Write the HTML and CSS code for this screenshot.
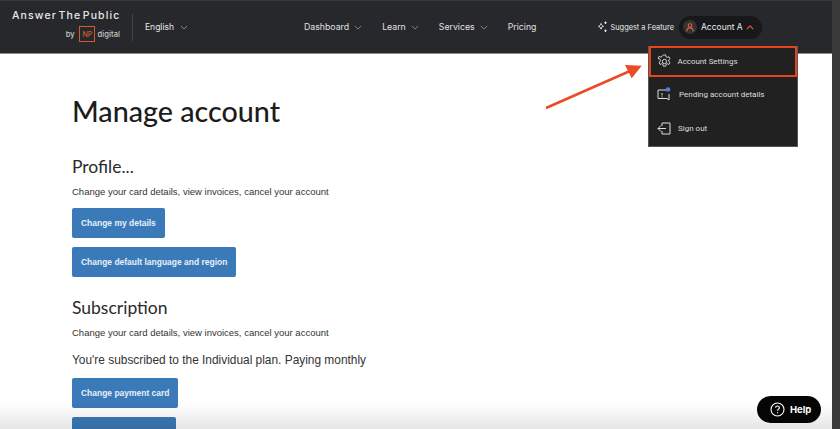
FILE: index.html
```html
<!DOCTYPE html>
<html lang="en">
<head>
    <meta charset="UTF-8">
    <meta name="viewport" content="width=device-width, initial-scale=1.0">
    <title>Manage account</title>
    <link rel="stylesheet" href="styles.css">
</head>
<body>
    <div class="page">
        <header class="topbar">
            <div class="brand">
                <div class="brand-name">Answer The Public</div>
                <div class="brand-by">
                    <span>by</span>
                    <span class="np-box">NP</span>
                    <span class="np-digital">digital</span>
                </div>
            </div>
            <div class="lang">
                <span>English</span>
                <svg class="chev" width="8" height="5" viewBox="0 0 10 6"><path d="M1 1l4 4 4-4"/></svg>
            </div>
            <nav class="nav">
                <a>Dashboard <svg class="chev" width="8" height="5" viewBox="0 0 10 6"><path d="M1 1l4 4 4-4"/></svg></a>
                <a>Learn <svg class="chev" width="8" height="5" viewBox="0 0 10 6"><path d="M1 1l4 4 4-4"/></svg></a>
                <a>Services <svg class="chev" width="8" height="5" viewBox="0 0 10 6"><path d="M1 1l4 4 4-4"/></svg></a>
                <a>Pricing</a>
            </nav>
            <div class="suggest">
                <svg width="12" height="12" viewBox="0 0 12 12" fill="none" stroke="#eee" stroke-width="1"><path d="M5 2.500c.4 1.600 1 2.300 2.500 2.800-1.500.5-2.100 1.200-2.500 2.800-.4-1.600-1-2.300-2.500-2.800 1.500-.5 2.100-1.200 2.500-2.800z"/><path d="M9.500 .5v2.500M8.300 1.700h2.400M9.500 8.500v2.500M8.300 9.700h2.400"/></svg>
                <span>Suggest a Feature</span>
            </div>
            <div class="account">
                <span class="avatar">
                    <svg width="8" height="9" viewBox="0 0 8 9" fill="none" stroke="#e2603a" stroke-width="1.100"><circle cx="4" cy="2.500" r="1.800"/><path d="M.8 8.500c0-2.200 1.400-3.600 3.200-3.600s3.200 1.400 3.200 3.600"/></svg>
                </span>
                <span class="account-name">Account A</span>
                <svg width="8" height="5" viewBox="0 0 10 6" fill="none" stroke="#ea5a30" stroke-width="1.500"><path d="M1 5l4-4 4 4"/></svg>
            </div>
        </header>

        <main class="content">
            <h1>Manage account</h1>

            <h2>Profile...</h2>
            <p class="hint">Change your card details, view invoices, cancel your account</p>
            <a class="button">Change my details</a>
            <a class="button">Change default language and region</a>

            <h2 class="subscription">Subscription</h2>
            <p class="hint">Change your card details, view invoices, cancel your account</p>
            <p class="plan">You're subscribed to the Individual plan. Paying monthly</p>
            <a class="button">Change payment card</a>
            <a class="button button-short">&nbsp;</a>
        </main>

        <div class="menu">
            <div class="menu-item menu-item-active">
                <svg width="15" height="15" viewBox="0 0 16 16" fill="none" stroke="#ddd" stroke-width="1"><path d="M6.800 1h2.400l.4 1.900 1.300.7 1.800-.7 1.200 2-1.400 1.300v1.600l1.400 1.300-1.200 2-1.800-.7-1.300.7-.4 1.900H6.800l-.4-1.900-1.300-.7-1.800.7-1.200-2 1.400-1.300V5.900L1.100 4.600l1.200-2 1.800.7 1.300-.7z"/><circle cx="8" cy="8" r="2.300"/></svg>
                <span>Account Settings</span>
            </div>
            <div class="menu-item">
                <svg width="14" height="15" viewBox="0 0 14 15" fill="none"><path d="M9 3H1v8.500h9l2 1.500V7" stroke="#ddd" stroke-width="1"/><path d="M5 6v2.500M5 9.500v1" stroke="#ddd" stroke-width="1"/><circle cx="11" cy="2.500" r="2.300" fill="#4a80e0"/></svg>
                <span class="menu-pending">Pending account details</span>
            </div>
            <div class="menu-item">
                <svg width="14" height="13" viewBox="0 0 14 13" fill="none" stroke="#ddd" stroke-width="1"><path d="M5 4V1h8v11H5V9M9 6.500H1M4 3.500l-3 3 3 3"/></svg>
                <span>Sign out</span>
            </div>
        </div>

        <svg class="arrow" width="100" height="50" viewBox="0 0 100 50"><path d="M1 46L85 9" stroke="#ea4a25" stroke-width="2.500"/><path d="M96.700 3.700L80 3l6.700 13.300z" fill="#ea4a25"/></svg>

        <div class="bottom-fade"></div>

        <div class="help">
            <svg width="15" height="15" viewBox="0 0 15 15" fill="none" stroke="#fff" stroke-width="1.100"><circle cx="7.500" cy="7.500" r="6.500"/><path d="M5.600 5.800c0-1.100.9-1.800 1.900-1.800s1.900.7 1.900 1.700c0 1.500-1.900 1.500-1.900 3"/><path d="M7.500 10.200v1.100"/></svg>
            <span>Help</span>
        </div>

        <div class="scrollbar"></div>
    </div>
</body>
</html>
```

FILE: styles.css
```css
:root {
    --bar-color: #27282b;
    --menu-color: #212121;
    --button-color: #3a7ab8;
    --text-color: #222;
}

html, body {
    margin: 0;
    height: 100%;
    overflow: hidden;
}

body {
    font-family: 'Liberation Sans', Arial, sans-serif;
    color: var(--text-color);
    background-color: white;
}

.page {
    position: relative;
    height: 429px;
    overflow: hidden;
}

.topbar {
    display: flex;
    align-items: center;
    height: 52px;
    background-color: var(--bar-color);
    border-top: 1px solid #3b3b3b;
    border-bottom: 1px solid #8a8a8a;
    color: #e8e8e8;
    font-family: Inter, sans-serif;
}

.brand {
    width: 108px;
    margin-left: 12px;
    margin-bottom: 2px;
}

.brand-name {
    font-size: 10.500px;
    font-weight: 500;
    letter-spacing: 1.150px;
    word-spacing: -2.500px;
    line-height: 12px;
    color: #e8e8e8;
    white-space: nowrap;
}

.brand-by {
    display: flex;
    align-items: center;
    justify-content: flex-end;
    margin-top: 4px;
    font-size: 7.500px;
    font-weight: 500;
    color: #c8c8c8;
}

.np-box {
    width: 14px;
    margin-left: 5px;
    margin-right: 2px;
    padding: 2.500px 0;
    text-align: center;
    border: 1px solid #cf5c30;
    color: #cf5c30;
    font-size: 7px;
    line-height: 9px;
}

.np-digital {
    font-size: 7.500px;
    letter-spacing: 0.1px;
}

.lang {
    display: flex;
    align-items: center;
    gap: 6px;
    height: 27px;
    margin-left: 12px;
    padding-left: 12px;
    border-left: 1px solid #444;
    font-size: 8.500px;
}

.chev {
    fill: none;
    stroke: #9a9a9a;
    stroke-width: 1;
}

.nav {
    display: flex;
    align-items: center;
    gap: 20px;
    margin-left: 116px;
    font-size: 8.750px;
    color: #e0e0e0;
}

.nav a {
    display: flex;
    align-items: center;
    gap: 5px;
    white-space: nowrap;
}

.suggest {
    display: flex;
    align-items: center;
    gap: 2px;
    margin-left: 60px;
    font-size: 7.400px;
    white-space: nowrap;
}

.account {
    display: flex;
    align-items: center;
    margin-left: 5px;
    height: 23px;
    padding: 0 8px 0 4px;
    border-radius: 12px;
    background-color: #17181a;
    font-size: 8.500px;
    white-space: nowrap;
}

.avatar {
    display: flex;
    align-items: center;
    justify-content: center;
    width: 14px;
    height: 14px;
    border-radius: 50%;
    background-color: #333;
}

.account-name {
    margin: 0 3px 0 4px;
}

.content {
    padding-left: 72px;
}

h1 {
    margin: 40px 0 0;
    font-family: Lato, sans-serif;
    font-size: 28.700px;
    line-height: 34px;
    font-weight: 500;
    color: #1c1c1c;
}

h2 {
    margin: 28px 0 0;
    font-family: Lato, sans-serif;
    font-size: 17.500px;
    line-height: 22px;
    font-weight: 400;
    color: #2a2a2a;
}

h2.subscription {
    margin-top: 20px;
}

.hint {
    margin: 8px 0 0;
    font-size: 9.500px;
    line-height: 12px;
    color: #333;
}

.plan {
    margin: 14px 0 0;
    font-size: 11.900px;
    line-height: 14px;
    color: #333;
}

.button {
    display: table;
    margin: 10px 0 0;
    padding: 0 9px;
    height: 30px;
    line-height: 30px;
    background-color: var(--button-color);
    border-radius: 2px;
    color: #e8f0f8;
    font-size: 8.470px;
    font-weight: 700;
}

.button + .button {
    margin-top: 9px;
}

.plan + .button {
    margin-top: 11px;
}

.button-short {
    width: 86px;
}

.menu {
    position: absolute;
    left: 648px;
    top: 46px;
    width: 150px;
    height: 101px;
    background-color: var(--menu-color);
    border: 1px solid #555;
    border-top: none;
    box-sizing: border-box;
    color: #ddd;
    font-family: Roboto, sans-serif;
    font-size: 8px;
}

.menu-item {
    display: flex;
    align-items: center;
    gap: 7px;
    height: 34px;
    padding-left: 8px;
    box-sizing: border-box;
}

.menu-item-active {
    height: 31px;
    border: 2.500px solid #e8431f;
    padding-left: 5.500px;
    gap: 6px;
    font-size: 7.900px;
}

.menu-pending {
    margin-left: 1px;
}

.arrow {
    position: absolute;
    left: 545px;
    top: 62px;
}

.bottom-fade {
    position: absolute;
    left: 0;
    right: 8px;
    bottom: 0;
    height: 26px;
    background: linear-gradient(to bottom, rgba(0,0,0,0), rgba(0,0,0,0.1));
}

.help {
    position: absolute;
    left: 757px;
    top: 396px;
    display: flex;
    align-items: center;
    gap: 5px;
    width: 64px;
    height: 27px;
    padding-left: 13px;
    box-sizing: border-box;
    border-radius: 14px;
    background-color: #050505;
    color: white;
    font-family: Inter, sans-serif;
    font-size: 9.500px;
    font-weight: 700;
}

.scrollbar {
    position: absolute;
    top: 0;
    right: 0;
    width: 8px;
    height: 429px;
    background-color: #3a3a3a;
}
```
